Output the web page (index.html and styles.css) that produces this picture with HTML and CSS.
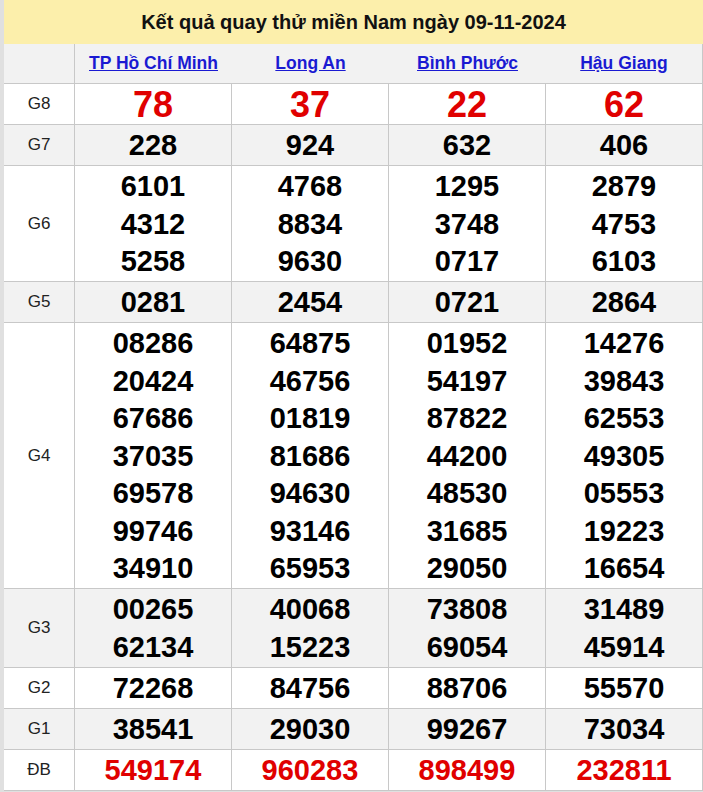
FILE: index.html
```html
<!DOCTYPE html>
<html lang="vi">
<head>
<meta charset="utf-8">
<title>Kết quả quay thử miền Nam</title>
<link rel="stylesheet" href="styles.css">
</head>
<body>
<div class="board">
  <div class="title">Kết quả quay thử miền Nam ngày 09-11-2024</div>
  <div class="row heads">
    <div class="cell label"></div>
    <div class="cell station"><a href="#">TP Hồ Chí Minh</a></div>
    <div class="cell station"><a href="#">Long An</a></div>
    <div class="cell station"><a href="#">Bình Phước</a></div>
    <div class="cell station"><a href="#">Hậu Giang</a></div>
  </div>
  <div class="row">
    <div class="cell label">G8</div>
    <div class="cell num big red">78</div>
    <div class="cell num big red">37</div>
    <div class="cell num big red">22</div>
    <div class="cell num big red">62</div>
  </div>
  <div class="row alt">
    <div class="cell label">G7</div>
    <div class="cell num">228</div>
    <div class="cell num">924</div>
    <div class="cell num">632</div>
    <div class="cell num">406</div>
  </div>
  <div class="row">
    <div class="cell label">G6</div>
    <div class="cell num">6101<br>4312<br>5258</div>
    <div class="cell num">4768<br>8834<br>9630</div>
    <div class="cell num">1295<br>3748<br>0717</div>
    <div class="cell num">2879<br>4753<br>6103</div>
  </div>
  <div class="row alt">
    <div class="cell label">G5</div>
    <div class="cell num">0281</div>
    <div class="cell num">2454</div>
    <div class="cell num">0721</div>
    <div class="cell num">2864</div>
  </div>
  <div class="row">
    <div class="cell label">G4</div>
    <div class="cell num">08286<br>20424<br>67686<br>37035<br>69578<br>99746<br>34910</div>
    <div class="cell num">64875<br>46756<br>01819<br>81686<br>94630<br>93146<br>65953</div>
    <div class="cell num">01952<br>54197<br>87822<br>44200<br>48530<br>31685<br>29050</div>
    <div class="cell num">14276<br>39843<br>62553<br>49305<br>05553<br>19223<br>16654</div>
  </div>
  <div class="row alt">
    <div class="cell label">G3</div>
    <div class="cell num">00265<br>62134</div>
    <div class="cell num">40068<br>15223</div>
    <div class="cell num">73808<br>69054</div>
    <div class="cell num">31489<br>45914</div>
  </div>
  <div class="row">
    <div class="cell label">G2</div>
    <div class="cell num">72268</div>
    <div class="cell num">84756</div>
    <div class="cell num">88706</div>
    <div class="cell num">55570</div>
  </div>
  <div class="row alt">
    <div class="cell label">G1</div>
    <div class="cell num">38541</div>
    <div class="cell num">29030</div>
    <div class="cell num">99267</div>
    <div class="cell num">73034</div>
  </div>
  <div class="row">
    <div class="cell label">ĐB</div>
    <div class="cell num red">549174</div>
    <div class="cell num red">960283</div>
    <div class="cell num red">898499</div>
    <div class="cell num red">232811</div>
  </div>
</div>
</body>
</html>
```
FILE: styles.css
```css
html, body {
  margin: 0;
  padding: 0;
}
body {
  background: #e0e0e0;
  font-family: "Liberation Sans", Arial, sans-serif;
  color: #000;
}
.board {
  margin-left: 4px;
  width: 699px;
}
.title {
  height: 44px;
  background: #fcefab;
  display: flex;
  align-items: center;
  justify-content: center;
  font-weight: bold;
  font-size: 20px;
  color: #111;
}
.row {
  display: grid;
  grid-template-columns: 71px repeat(4, 157px);
  border-bottom: 1px solid #c8c8c8;
  background: #fff;
}
.row.alt {
  background: #f2f2f2;
}
.cell {
  border-right: 1px solid #c8c8c8;
  text-align: center;
}
.label {
  font-size: 17px;
  color: #222;
  display: flex;
  align-items: center;
  justify-content: center;
}
.heads {
  background: #f2f2f2;
  height: 39px;
}
.heads .station {
  border-right: none;
  display: flex;
  align-items: center;
  justify-content: center;
}
.heads .station:last-child {
  border-right: 1px solid #c8c8c8;
}
.station a {
  color: #1a1ad2;
  font-weight: bold;
  font-size: 17.5px;
  text-decoration: underline;
}
.num {
  font-weight: bold;
  font-size: 29px;
  line-height: 37.5px;
  padding: 2px 0 0.5px;
}
.num.big {
  font-size: 36px;
}
.red {
  color: #e00000;
}
```
